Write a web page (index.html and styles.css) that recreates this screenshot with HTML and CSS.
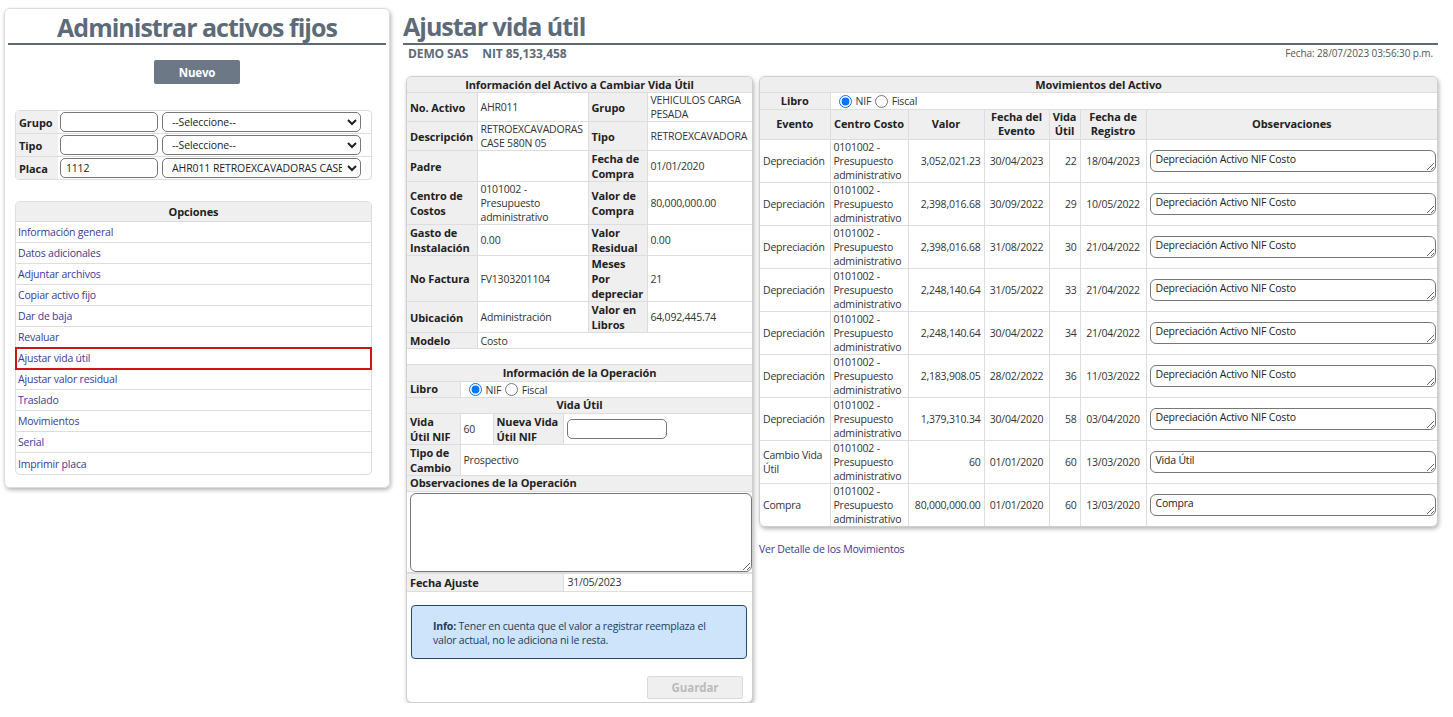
FILE: index.html
```html
<!DOCTYPE html>
<html lang="es">
<head>
<meta charset="utf-8">
<title>Ajustar vida útil</title>
<link rel="stylesheet" href="styles.css">
</head>
<body>
<div class="page">
  <aside class="side">
    <h1 class="side-title">Administrar activos fijos</h1>
    <div class="new-wrap"><button class="btn-new" type="button">Nuevo</button></div>
    <table class="filter">
      <tr><th>Grupo</th><td class="c-inp"><input class="inp" type="text"></td><td class="c-sel"><select class="sel"><option>--Seleccione--</option></select></td></tr>
      <tr><th>Tipo</th><td class="c-inp"><input class="inp" type="text"></td><td class="c-sel"><select class="sel"><option>--Seleccione--</option></select></td></tr>
      <tr><th>Placa</th><td class="c-inp"><input class="inp" type="text" value="1112"></td><td class="c-sel"><select class="sel"><option>AHR011 RETROEXCAVADORAS CASE 580N 05</option></select></td></tr>
    </table>
    <table class="options">
      <tr><th>Opciones</th></tr>
      <tr><td><a href="#">Información general</a></td></tr>
      <tr><td><a href="#">Datos adicionales</a></td></tr>
      <tr><td><a href="#">Adjuntar archivos</a></td></tr>
      <tr><td><a href="#">Copiar activo fijo</a></td></tr>
      <tr><td><a href="#">Dar de baja</a></td></tr>
      <tr><td><a href="#">Revaluar</a></td></tr>
      <tr><td class="active"><a href="#">Ajustar vida útil</a></td></tr>
      <tr><td><a href="#">Ajustar valor residual</a></td></tr>
      <tr><td><a href="#">Traslado</a></td></tr>
      <tr><td><a href="#">Movimientos</a></td></tr>
      <tr><td><a href="#">Serial</a></td></tr>
      <tr><td><a href="#">Imprimir placa</a></td></tr>
    </table>
  </aside>

  <main class="main">
    <h1 class="main-title">Ajustar vida útil</h1>
    <div class="subbar">
      <div class="company"><span>DEMO SAS</span><span>NIT 85,133,458</span></div>
      <div class="date">Fecha: 28/07/2023 03:56:30 p.m.</div>
    </div>

    <div class="panels">
      <section class="panel panel-info">
        <div class="panel-head">Información del Activo a Cambiar Vida Útil</div>
        <table class="grid info">
          <colgroup><col class="w1"><col class="w2"><col class="w3"><col class="w4"></colgroup>
          <tr class="h29"><th>No. Activo</th><td>AHR011</td><th>Grupo</th><td>VEHICULOS CARGA PESADA</td></tr>
          <tr class="h28"><th>Descripción</th><td>RETROEXCAVADORAS CASE 580N 05</td><th>Tipo</th><td>RETROEXCAVADORA</td></tr>
          <tr class="h31"><th>Padre</th><td></td><th>Fecha de Compra</th><td>01/01/2020</td></tr>
          <tr class="h43"><th>Centro de Costos</th><td>0101002 - Presupuesto administrativo</td><th>Valor de Compra</th><td>80,000,000.00</td></tr>
          <tr class="h32"><th>Gasto de Instalación</th><td>0.00</td><th>Valor Residual</th><td>0.00</td></tr>
          <tr class="h46"><th>No Factura</th><td>FV1303201104</td><th>Meses Por depreciar</th><td>21</td></tr>
          <tr class="h30"><th>Ubicación</th><td>Administración</td><th>Valor en Libros</th><td>64,092,445.74</td></tr>
          <tr class="h16"><th>Modelo</th><td colspan="3">Costo</td></tr>
          <tr class="h15 r-empty"><td colspan="4"></td></tr>
        </table>
        <table class="grid vida">
          <colgroup><col class="v1"><col class="v2"><col class="v3"><col class="v4"></colgroup>
          <tr class="h17 first"><th class="sec" colspan="4">Información de la Operación</th></tr>
          <tr class="h16"><th>Libro</th><td colspan="3" class="radios">
            <label><input type="radio" name="lib1" checked> NIF</label>
            <label><input type="radio" name="lib1"> Fiscal</label>
          </td></tr>
          <tr class="h16"><th class="sec" colspan="4">Vida Útil</th></tr>
          <tr class="h30"><th>Vida Útil&nbsp;NIF</th><td>60</td><th>Nueva Vida Útil&nbsp;NIF</th><td><input class="inp inp-vida" type="text"></td></tr>
          <tr class="h31"><th>Tipo de Cambio</th><td colspan="3">Prospectivo</td></tr>
          <tr class="h16"><th class="sec left" colspan="4">Observaciones de la Operación</th></tr>
          <tr><td colspan="4" class="ta-cell"><textarea class="ta-big"></textarea></td></tr>
        </table>
        <table class="grid fecha">
          <tr class="h18"><th class="f1">Fecha Ajuste</th><td>31/05/2023</td></tr>
        </table>
        <div class="info-box"><b>Info:</b> Tener en cuenta que el valor a registrar reemplaza el valor actual, no le adiciona ni le resta.</div>
        <div class="actions"><button class="btn-save" type="button" disabled>Guardar</button></div>
      </section>

      <div class="right-col">
        <section class="panel panel-mov">
          <div class="panel-head">Movimientos del Activo</div>
          <table class="grid mov">
            <colgroup><col class="m1"><col class="m2"><col class="m3"><col class="m4"><col class="m5"><col class="m6"><col class="m7"></colgroup>
            <tr class="h16"><th class="c">Libro</th><td colspan="6" class="radios">
              <label><input type="radio" name="lib2" checked> NIF</label>
              <label><input type="radio" name="lib2"> Fiscal</label>
            </td></tr>
            <tr class="h31 r-head"><th>Evento</th><th>Centro Costo</th><th>Valor</th><th>Fecha del Evento</th><th>Vida Útil</th><th>Fecha de Registro</th><th>Observaciones</th></tr>
            <tr class="h43"><td>Depreciación</td><td>0101002 - Presupuesto administrativo</td><td class="num">3,052,021.23</td><td class="c">30/04/2023</td><td class="num">22</td><td class="c">18/04/2023</td><td class="obs"><textarea>Depreciación Activo NIF Costo</textarea></td></tr>
            <tr class="h43"><td>Depreciación</td><td>0101002 - Presupuesto administrativo</td><td class="num">2,398,016.68</td><td class="c">30/09/2022</td><td class="num">29</td><td class="c">10/05/2022</td><td class="obs"><textarea>Depreciación Activo NIF Costo</textarea></td></tr>
            <tr class="h43"><td>Depreciación</td><td>0101002 - Presupuesto administrativo</td><td class="num">2,398,016.68</td><td class="c">31/08/2022</td><td class="num">30</td><td class="c">21/04/2022</td><td class="obs"><textarea>Depreciación Activo NIF Costo</textarea></td></tr>
            <tr class="h43"><td>Depreciación</td><td>0101002 - Presupuesto administrativo</td><td class="num">2,248,140.64</td><td class="c">31/05/2022</td><td class="num">33</td><td class="c">21/04/2022</td><td class="obs"><textarea>Depreciación Activo NIF Costo</textarea></td></tr>
            <tr class="h43"><td>Depreciación</td><td>0101002 - Presupuesto administrativo</td><td class="num">2,248,140.64</td><td class="c">30/04/2022</td><td class="num">34</td><td class="c">21/04/2022</td><td class="obs"><textarea>Depreciación Activo NIF Costo</textarea></td></tr>
            <tr class="h43"><td>Depreciación</td><td>0101002 - Presupuesto administrativo</td><td class="num">2,183,908.05</td><td class="c">28/02/2022</td><td class="num">36</td><td class="c">11/03/2022</td><td class="obs"><textarea>Depreciación Activo NIF Costo</textarea></td></tr>
            <tr class="h43"><td>Depreciación</td><td>0101002 - Presupuesto administrativo</td><td class="num">1,379,310.34</td><td class="c">30/04/2020</td><td class="num">58</td><td class="c">03/04/2020</td><td class="obs"><textarea>Depreciación Activo NIF Costo</textarea></td></tr>
            <tr class="h43"><td>Cambio Vida Útil</td><td>0101002 - Presupuesto administrativo</td><td class="num">60</td><td class="c">01/01/2020</td><td class="num">60</td><td class="c">13/03/2020</td><td class="obs"><textarea>Vida Útil</textarea></td></tr>
            <tr class="h43"><td>Compra</td><td>0101002 - Presupuesto administrativo</td><td class="num">80,000,000.00</td><td class="c">01/01/2020</td><td class="num">60</td><td class="c">13/03/2020</td><td class="obs"><textarea>Compra</textarea></td></tr>
          </table>
        </section>
        <a class="detail-link" href="#">Ver Detalle de los Movimientos</a>
      </div>
    </div>
  </main>
</div>
</body>
</html>
```

FILE: styles.css
```css
* { box-sizing: border-box; }

body {
  margin: 0;
  font-family: "Open Sans", "Noto Sans", sans-serif;
  font-size: 10.5px;
  letter-spacing: -0.2px;
  color: #333;
  background: #fff;
}

.page {
  display: flex;
  align-items: flex-start;
  padding: 8px 15px 0 4px;
}

/* ---------- left panel ---------- */
.side {
  width: 386px;
  flex: none;
  border: 1px solid #dcdcdc;
  border-radius: 6px;
  box-shadow: 1px 2px 4px rgba(0, 0, 0, 0.3);
  padding: 0 3px 12px 3px;
}

.side-title,
.main-title {
  margin: 0;
  height: 37px;
  font-size: 25px;
  line-height: 36px;
  font-weight: 700;
  color: #5d6b79;
  border-bottom: 2px solid #5d6b79;
  letter-spacing: -1px;
}

.side-title { text-align: center; height: 36px; }

.new-wrap {
  display: flex;
  justify-content: center;
  padding-top: 15px;
}

.btn-new {
  width: 86px;
  height: 24px;
  border: none;
  border-radius: 2px;
  background: #6c7886;
  color: #fff;
  font-family: inherit;
  font-size: 11.5px;
  font-weight: 700;
  letter-spacing: -0.2px;
}

.filter {
  margin: 26px 0 0 7px;
  width: 357px;
  border-collapse: separate;
  border-spacing: 0;
  border: 1px solid #ddd;
  border-radius: 4px;
}

.filter th {
  width: 42px;
  background: #f0f0f0;
  text-align: left;
  padding: 0 3px;
  font-size: 11px;
  font-weight: 700;
  letter-spacing: -0.1px;
  color: #222;
  height: 22px;
  border-bottom: 1px solid #ddd;
}

.filter tr:last-child th,
.filter tr:last-child td { border-bottom: none; }

.filter td {
  padding: 1px 2px;
  border-bottom: 1px solid #ddd;
}

.filter .c-inp { width: 102px; }

.inp {
  display: block;
  width: 100%;
  height: 20px;
  border: 1px solid #777;
  border-radius: 5px;
  padding: 0 5px;
  font-family: inherit;
  font-size: 10.5px;
  letter-spacing: -0.2px;
  color: #222;
  background: #fff;
}

.sel {
  display: block;
  width: 199px;
  height: 20px;
  border: 1px solid #777;
  border-radius: 5px;
  padding: 0 2px 0 5px;
  font-family: inherit;
  font-size: 10.5px;
  letter-spacing: -0.1px;
  color: #222;
  background: #fff;
}

.options {
  margin: 21px 0 0 7px;
  width: 357px;
  border-collapse: separate;
  border-spacing: 0;
  border: 1px solid #ddd;
  border-radius: 5px;
}

.options th {
  height: 20px;
  background: #efefef;
  font-size: 11px;
  font-weight: 700;
  letter-spacing: -0.1px;
  color: #222;
  border-bottom: 1px solid #ddd;
  border-radius: 5px 5px 0 0;
  padding: 0;
}

.options td {
  height: 21px;
  padding: 0 2px;
  line-height: 14px;
  border-bottom: 1px solid #ddd;
}

.options tr:last-child td { border-bottom: none; }

.options td.active {
  outline: 2px solid #c8161b;
  outline-offset: -1px;
}

.options a,
.detail-link {
  color: #3a3a94;
  text-decoration: none;
}

/* ---------- main ---------- */
.main {
  flex: 1;
  margin-left: 13px;
  min-width: 0;
}

.subbar {
  display: flex;
  justify-content: space-between;
  align-items: center;
  height: 16px;
  padding: 0 5px;
}

.company {
  display: flex;
  gap: 14px;
  font-weight: 700;
  font-size: 12px;
  letter-spacing: -0.1px;
  color: #5d6b79;
}

.date {
  color: #555;
  font-size: 10px;
  letter-spacing: -0.1px;
}

.panels {
  display: flex;
  align-items: flex-start;
  gap: 6px;
  margin: 15px 0 0 3px;
}

.panel {
  border: 1px solid #cfcfcf;
  border-radius: 6px;
  box-shadow: 1px 2px 4px rgba(0, 0, 0, 0.3);
  overflow: hidden;
  background: #fff;
}

.panel-head {
  height: 16px;
  line-height: 15px;
  background: #eee;
  text-align: center;
  font-weight: 700;
  font-size: 11px;
  letter-spacing: -0.1px;
  color: #222;
  border-bottom: 1px solid #ddd;
}

.panel-info {
  width: 347px;
  flex: none;
  padding-bottom: 3px;
}

.grid {
  width: 100%;
  border-collapse: collapse;
  table-layout: fixed;
}

.grid th,
.grid td {
  border: 1px solid #ddd;
  padding: 0 3px;
  line-height: 14px;
  vertical-align: middle;
}

.grid tr > :first-child { border-left: none; }
.grid tr > :last-child { border-right: none; }

.grid th {
  background: #efefef;
  font-weight: 700;
  font-size: 11px;
  letter-spacing: -0.1px;
  color: #222;
  text-align: left;
  line-height: 15px;
}

.grid td { color: #333; }

.grid .c { text-align: center; }
.grid .num { text-align: right; }

.grid th.sec { text-align: center; }
.grid th.sec.left { text-align: left; }

.h15 { height: 15px; }
.h16 { height: 16px; }
.h17 { height: 17px; }
.h18 { height: 18px; }
.h28 { height: 28px; }
.h29 { height: 28px; }
.h30 { height: 30px; }
.h31 { height: 30px; }
.h32 { height: 31px; }
.h43 { height: 43px; }
.h46 { height: 46px; }

.grid tr.h16 > *, .grid tr.h15 > *, .grid tr.h17 > * { line-height: 14px; }

.info .w1 { width: 70px; }
.info .w2 { width: 111px; }
.info .w3 { width: 59px; }
.info .w4 { width: 105px; }

.info tr:first-child > * { border-top: none; }
.r-empty td { background: #fff; border-bottom: none; }

.radios { padding-left: 8px !important; }
.radios label { display: inline-flex; align-items: center; margin-right: 1px; vertical-align: middle; }
.radios input { margin: 0 4px 0 0; width: 13px; height: 13px; }

.vida .v1 { width: 53px; }
.vida .v2 { width: 33px; }
.vida .v3 { width: 70px; }
.vida .v4 { width: 189px; }

.vida tr.first > * { border-top: 1px solid #ddd; }

.inp-vida { width: 100px; }

.ta-cell { padding: 1px 3px 0 3px !important; }

.ta-big {
  display: block;
  width: 342px;
  height: 79px;
  border: 1px solid #777;
  border-radius: 6px;
  font-family: inherit;
  font-size: 10.5px;
  resize: vertical;
}

.fecha th.f1 { width: 156px; }
.fecha td { padding-left: 4px; }

.info-box {
  margin: 13px 5px 0 4px;
  height: 54px;
  padding: 13px 20px 0 21px;
  background: #cde4fb;
  border: 1px solid #284869;
  border-radius: 4px;
  color: #1f3c5b;
  line-height: 14px;
}

.actions {
  display: flex;
  justify-content: flex-end;
  padding: 17px 9px 0 0;
}

.btn-save {
  width: 96px;
  height: 23px;
  background: #efefef;
  border: 1px solid #dadada;
  border-radius: 2px;
  color: #bbb;
  font-family: inherit;
  font-weight: 700;
  font-size: 11.5px;
  letter-spacing: -0.1px;
}

/* ---------- right ---------- */
.right-col {
  width: 679px;
  flex: none;
}

.mov .m1 { width: 70px; }
.mov .m2 { width: 78px; }
.mov .m3 { width: 76px; }
.mov .m4 { width: 65px; }
.mov .m5 { width: 31px; }
.mov .m6 { width: 66px; }
.mov .m7 { width: auto; }

.mov tr:first-child > * { border-top: none; }
.mov .r-head th { text-align: center; padding: 0 2px; line-height: 14px; }

.mov td { padding: 0 3px; }
.mov tr:last-child td { border-bottom: none; }

.mov textarea {
  display: block;
  width: 286px;
  height: 22px;
  border: 1px solid #777;
  border-radius: 6px;
  padding: 1px 5px;
  font-family: inherit;
  font-size: 10.5px;
  letter-spacing: -0.2px;
  color: #222;
  resize: vertical;
  overflow: hidden;
}

.detail-link {
  display: inline-block;
  margin-top: 15px;
}
```
